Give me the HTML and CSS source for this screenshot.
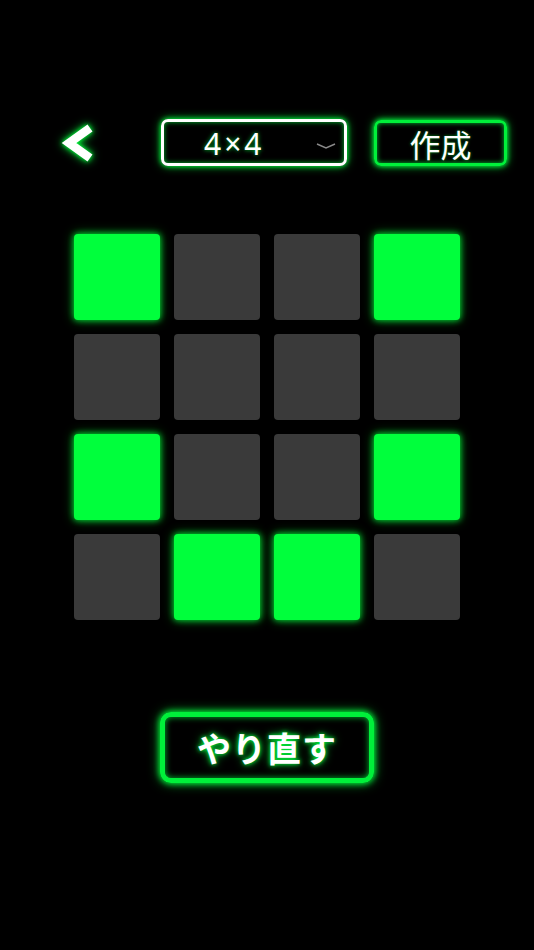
FILE: index.html
```html
<!DOCTYPE html>
<html lang="ja">
<head>
<meta charset="utf-8">
<title>作成</title>
<link rel="stylesheet" href="styles.css">
</head>
<body>
<div class="screen">
  <header class="toolbar">
    <button class="back" aria-label="戻る">
      <svg width="40" height="48" viewBox="0 0 40 48">
        <polyline points="34,9 13,24 34,39" fill="none" stroke="#fff" stroke-width="8.5" stroke-linecap="butt" stroke-linejoin="miter"/>
      </svg>
    </button>
    <div class="select">
      <span class="select-value">4×4</span>
      <svg class="select-caret" width="20" height="6" viewBox="0 0 20 6">
        <polyline points="1,1 10,5 19,1" fill="none" stroke="#8a8a8a" stroke-width="1.4"/>
      </svg>
    </div>
    <button class="make">作成</button>
  </header>

  <div class="grid">
    <div class="cell on"></div><div class="cell"></div><div class="cell"></div><div class="cell on"></div>
    <div class="cell"></div><div class="cell"></div><div class="cell"></div><div class="cell"></div>
    <div class="cell on"></div><div class="cell"></div><div class="cell"></div><div class="cell on"></div>
    <div class="cell"></div><div class="cell on"></div><div class="cell on"></div><div class="cell"></div>
  </div>

  <div class="footer">
    <button class="redo">やり直す</button>
  </div>
</div>
</body>
</html>
```

FILE: styles.css
```css
html, body {
  margin: 0;
  padding: 0;
  background: #000;
}
body {
  font-family: "Noto Sans CJK JP", "Noto Sans", sans-serif;
  color: #fff;
}
.screen {
  width: 534px;
  height: 950px;
  padding-top: 119px;
  box-sizing: border-box;
}
button {
  font-family: inherit;
  color: #fff;
  background: none;
  padding: 0;
  margin: 0;
  cursor: pointer;
}
.toolbar {
  display: flex;
  align-items: center;
  height: 47px;
  padding-left: 56px;
}
.back {
  border: none;
  width: 40px;
  height: 48px;
  display: flex;
  align-items: center;
  justify-content: center;
  filter: drop-shadow(0 0 2px #00ff3c) drop-shadow(0 0 4px #00d030);
}
.back svg { display: block; }
.select {
  margin-left: 65px;
  width: 186px;
  height: 47px;
  box-sizing: border-box;
  border: 3px solid #fff;
  border-radius: 7px;
  box-shadow: 0 0 5px #00ff3c, 0 0 10px #00c030, inset 0 0 5px #00c030;
  display: flex;
  align-items: center;
  position: relative;
}
.select-value {
  font-family: "Noto Sans", sans-serif;
  font-size: 30px;
  line-height: 1;
  margin-left: 40px;
  margin-top: 3px;
  letter-spacing: 3px;
  text-shadow: 0 0 4px #00c030;
}
.select-caret {
  position: absolute;
  right: 8px;
  top: 21px;
}
.make {
  margin-left: 27px;
  width: 133px;
  height: 46px;
  box-sizing: border-box;
  border: 3px solid #00f03a;
  border-radius: 7px;
  font-size: 31px;
  line-height: 1;
  padding-top: 2px;
  box-shadow: 0 0 5px #00ff3c, 0 0 10px #00c030, inset 0 0 5px #00c030;
  text-shadow: 0 0 3px #00a020;
}
.grid {
  margin: 68px auto 0;
  width: 386px;
  display: grid;
  grid-template-columns: repeat(4, 86px);
  grid-auto-rows: 86px;
  gap: 14px;
}
.cell {
  background: #3a3a3a;
  border-radius: 4px;
}
.cell.on {
  background: #00ff3c;
  box-shadow: 0 0 6px #00e035, 0 0 12px rgba(0, 200, 40, 0.6);
}
.footer {
  display: flex;
  padding-left: 160px;
  margin-top: 92px;
}
.redo {
  width: 214px;
  height: 71px;
  box-sizing: border-box;
  border: 5px solid #00f03a;
  border-radius: 11px;
  font-size: 34px;
  font-weight: 700;
  line-height: 1;
  letter-spacing: 1px;
  box-shadow: 0 0 6px #00ff3c, 0 0 12px #00c030, inset 0 0 6px #00c030;
  text-shadow: 0 0 4px #00ff3c, 0 0 8px #00c030;
}
```
